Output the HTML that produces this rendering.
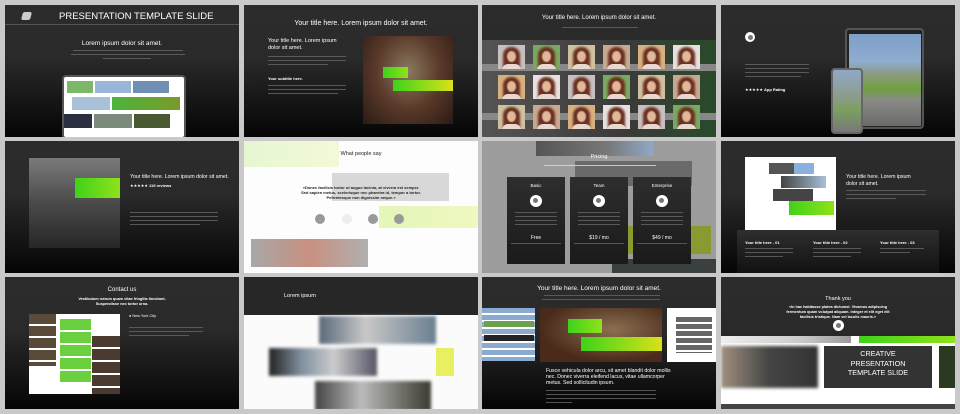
<!DOCTYPE html>
<html><head><meta charset="utf-8"><style>
*{margin:0;padding:0;box-sizing:border-box}
body{width:960px;height:414px;background:#c9c9c9;position:relative;overflow:hidden;font-family:"Liberation Sans",sans-serif;color:#fff}
.s{position:absolute;width:234px;height:132px;overflow:hidden;background:linear-gradient(#2c2c2c,#2a2a2a 40%,#050505)}
.a{position:absolute}
.t{position:absolute;white-space:nowrap}
.ln{position:absolute;height:2px;background:#666;opacity:.8}
.c{text-align:center;left:0;right:0}
.g{background:linear-gradient(90deg,#3fd21a,#8fe21a)}
.gy{background:linear-gradient(90deg,#3fd21a,#d8e21a)}
.ic{position:absolute;border-radius:50%;background:#fff;width:11px;height:11px}
.ic:after{content:"";position:absolute;left:3px;top:3px;width:5px;height:5px;border-radius:50%;background:#777}
.bl{filter:blur(1.5px)}
</style></head><body>

<!-- 1 -->
<div class="s" style="left:5px;top:5px">
 <div class="a" style="left:17px;top:7px;width:9px;height:8px;background:#ccc;transform:skewX(-15deg);border-radius:2px"></div>
 <div class="t" style="left:54px;top:6px;font-size:9.5px">PRESENTATION TEMPLATE SLIDE</div>
 <div class="a" style="left:0;top:19px;width:234px;height:1px;background:#555"></div>
 <div class="t c" style="top:35px;font-size:6.5px;text-align:center">Lorem ipsum dolor sit amet.</div>
 <div class="ln" style="left:68px;top:45px;width:110px;height:1px"></div>
 <div class="ln" style="left:66px;top:49px;width:114px;height:1px"></div>
 <div class="ln" style="left:98px;top:53px;width:48px;height:1px"></div>
 <div class="a" style="left:57px;top:70px;width:124px;height:64px;border:2px solid #555;border-radius:4px;background:#fff">
  <div class="a" style="left:3px;top:4px;width:26px;height:12px;background:#7cb86a"></div>
  <div class="a" style="left:31px;top:4px;width:36px;height:12px;background:#9bb5d8"></div>
  <div class="a" style="left:69px;top:4px;width:36px;height:12px;background:#6f8fb5"></div>
  <div class="a" style="left:8px;top:20px;width:38px;height:13px;background:#a9c0d9"></div>
  <div class="a" style="left:48px;top:20px;width:68px;height:13px;background:linear-gradient(90deg,#4cb43a,#7a9a2a)"></div>
  <div class="a" style="left:0;top:37px;width:28px;height:14px;background:#2a3040"></div>
  <div class="a" style="left:30px;top:37px;width:38px;height:14px;background:#7b8a7a"></div>
  <div class="a" style="left:70px;top:37px;width:36px;height:14px;background:#4a5a30"></div>
 </div>
</div>

<!-- 2 -->
<div class="s" style="left:244px;top:5px">
 <div class="t c" style="top:15px;font-size:7px;text-align:center">Your title here. Lorem ipsum dolor sit amet.</div>
 <div class="t" style="left:24px;top:33px;font-size:5.5px;line-height:7px">Your title here. Lorem ipsum<br>dolor sit amet.</div>
 <div class="ln" style="left:24px;top:51px;width:78px;height:1px"></div>
 <div class="ln" style="left:24px;top:55px;width:78px;height:1px"></div>
 <div class="ln" style="left:24px;top:59px;width:60px;height:1px"></div>
 <div class="t" style="left:24px;top:71px;font-size:4px;font-weight:bold">Your subtitle here.</div>
 <div class="ln" style="left:24px;top:80px;width:78px;height:1px"></div>
 <div class="ln" style="left:24px;top:84px;width:78px;height:1px"></div>
 <div class="ln" style="left:24px;top:88px;width:70px;height:1px"></div>
 <div class="a" style="left:119px;top:31px;width:90px;height:88px;background:radial-gradient(ellipse at 50% 40%,#8a7a60,#5a3a2a 50%,#2a1a15)"></div>
 <div class="a g" style="left:139px;top:62px;width:25px;height:11px"></div>
 <div class="a gy" style="left:149px;top:75px;width:60px;height:11px"></div>
</div>

<!-- 3 -->
<div class="s" style="left:482px;top:5px">
 <div class="t c" style="top:10px;font-size:6px;text-align:center">Your title here. Lorem ipsum dolor sit amet.</div>
 <div class="ln" style="left:80px;top:22px;width:76px;height:1px"></div>
 <div class="a" style="left:0;top:35px;width:234px;height:97px;background:linear-gradient(90deg,#555,#3a3a3a 60%,#2a4a2a)"></div>
 <div class="a" style="left:0;top:59px;width:234px;height:7px;background:#888"></div>
 <div class="a" style="left:0;top:108px;width:234px;height:7px;background:#888"></div>
 <div id="faces"></div>
</div>

<!-- 4 -->
<div class="s" style="left:721px;top:5px">
 <div class="ic" style="left:24px;top:27px;width:10px;height:10px"></div>
 <div class="ln" style="left:24px;top:59px;width:64px;height:1px"></div>
 <div class="ln" style="left:24px;top:63px;width:64px;height:1px"></div>
 <div class="ln" style="left:24px;top:67px;width:64px;height:1px"></div>
 <div class="ln" style="left:24px;top:71px;width:56px;height:1px"></div>
 <div class="t" style="left:24px;top:82px;font-size:4px">★★★★★ <b>App Rating</b></div>
 <div class="a" style="left:124px;top:23px;width:79px;height:101px;border:2px solid #555;border-radius:4px;background:#222"></div>
 <div class="a" style="left:128px;top:29px;width:72px;height:92px;background:linear-gradient(#7e9fc8 0,#90acd0 30%,#8a9a7a 45%,#6fa040 60%,#8a8a88 72%,#6a6a68)"></div>
 <div class="a" style="left:110px;top:63px;width:32px;height:66px;border:2px solid #666;border-radius:4px;background:linear-gradient(#90a8c8,#8a9a80 50%,#7aa060 65%,#777)"></div>
</div>

<!-- 5 -->
<div class="s" style="left:5px;top:141px">
 <div class="a" style="left:24px;top:17px;width:91px;height:90px;background:linear-gradient(#7a7a7a,#4a4a4a 50%,#262626)"></div>
 <div class="a g" style="left:70px;top:37px;width:45px;height:20px"></div>
 <div class="t" style="left:125px;top:33px;font-size:5.2px">Your title here. Lorem ipsum dolor sit amet.</div>
 <div class="t" style="left:125px;top:42px;font-size:4px">★★★★★ <b>119 reviews</b></div>
 <div class="ln" style="left:125px;top:71px;width:88px;height:1px"></div>
 <div class="ln" style="left:125px;top:75px;width:88px;height:1px"></div>
 <div class="ln" style="left:125px;top:79px;width:88px;height:1px"></div>
 <div class="ln" style="left:125px;top:83px;width:70px;height:1px"></div>
</div>

<!-- 6 -->
<div class="s" style="left:244px;top:141px;background:#fdfdfd">
 <div class="a" style="left:0;top:0;width:95px;height:26px;background:linear-gradient(90deg,#e6f7d2,#f3f9d8)"></div>
 <div class="t c" style="top:10px;font-size:5.5px;color:#222;text-align:center">What people say</div>
 <div class="a" style="left:88px;top:32px;width:117px;height:28px;background:#d8d8d8"></div>
 <div class="a" style="left:135px;top:65px;width:99px;height:22px;background:linear-gradient(90deg,#e4f6b8,#eef8c0)"></div>
 <div class="t c" style="top:44px;font-size:4px;color:#222;font-weight:bold;text-align:center;line-height:5px">«Donec facilisis tortor ut augue lacinia, at viverra est semper.<br>Sed sapien metus, scelerisque nec pharetra id, tempor a tortor.<br>Pellentesque non dignissim neque.»</div>
 <div class="a" style="left:71px;top:73px;width:10px;height:10px;border-radius:50%;background:#999"></div>
 <div class="a" style="left:98px;top:73px;width:10px;height:10px;border-radius:50%;background:#eee"></div>
 <div class="a" style="left:124px;top:73px;width:10px;height:10px;border-radius:50%;background:#999"></div>
 <div class="a" style="left:150px;top:73px;width:10px;height:10px;border-radius:50%;background:#999"></div>
 <div class="a" style="left:7px;top:98px;width:117px;height:28px;background:linear-gradient(90deg,#a8a8a8,#c89080 50%,#b0b0b0)"></div>
</div>

<!-- 7 -->
<div class="s" style="left:482px;top:141px;background:#9c9c9c">
 <div class="a" style="left:54px;top:0;width:117px;height:15px;background:linear-gradient(90deg,#555,#777 60%,#90a8c8)"></div>
 <div class="a" style="left:93px;top:20px;width:117px;height:25px;background:#6a6a6a"></div>
 <div class="a" style="left:145px;top:85px;width:84px;height:28px;background:#8a9a30"></div>
 <div class="a" style="left:130px;top:118px;width:104px;height:14px;background:#3a4040"></div>
 <div class="t c" style="top:13px;font-size:5.5px;text-align:center">Pricing</div>
 <div class="ln" style="left:62px;top:24px;width:112px;height:1px;background:#ddd"></div>
 <div id="cards"></div>
</div>

<!-- 8 -->
<div class="s" style="left:721px;top:141px">
 <div class="a" style="left:24px;top:16px;width:91px;height:74px;background:#fff"></div>
 <div class="a" style="left:48px;top:22px;width:25px;height:11px;background:#555"></div>
 <div class="a" style="left:73px;top:22px;width:20px;height:11px;background:#8ab0e0"></div>
 <div class="a" style="left:60px;top:35px;width:45px;height:12px;background:linear-gradient(90deg,#444,#a8c0d8)"></div>
 <div class="a" style="left:52px;top:48px;width:40px;height:12px;background:#444"></div>
 <div class="a g" style="left:68px;top:60px;width:45px;height:14px"></div>
 <div class="t" style="left:125px;top:33px;font-size:5.2px;line-height:7px">Your title here. Lorem ipsum<br>dolor sit amet.</div>
 <div class="ln" style="left:125px;top:49px;width:80px;height:1px"></div>
 <div class="ln" style="left:125px;top:53px;width:80px;height:1px"></div>
 <div class="ln" style="left:125px;top:57px;width:50px;height:1px"></div>
 <div class="a" style="left:16px;top:89px;width:202px;height:43px;background:linear-gradient(#2e2e2e,#111)"></div>
 <div class="t" style="left:24px;top:99px;font-size:4px;font-weight:bold">Your title here - 01</div>
 <div class="t" style="left:92px;top:99px;font-size:4px;font-weight:bold">Your title here - 02</div>
 <div class="t" style="left:159px;top:99px;font-size:4px;font-weight:bold">Your title here - 03</div>
 <div class="ln" style="left:24px;top:107px;width:48px;height:1px"></div><div class="ln" style="left:24px;top:111px;width:48px;height:1px"></div><div class="ln" style="left:24px;top:115px;width:38px;height:1px"></div>
 <div class="ln" style="left:92px;top:107px;width:48px;height:1px"></div><div class="ln" style="left:92px;top:111px;width:48px;height:1px"></div><div class="ln" style="left:92px;top:115px;width:38px;height:1px"></div>
 <div class="ln" style="left:159px;top:107px;width:44px;height:1px"></div><div class="ln" style="left:159px;top:111px;width:30px;height:1px"></div>
</div>

<!-- 9 -->
<div class="s" style="left:5px;top:277px">
 <div class="t c" style="top:10px;font-size:6px;text-align:center">Contact us</div>
 <div class="t c" style="top:20px;font-size:3.8px;font-weight:bold;text-align:center;line-height:5px">Vestibulum rutrum quam vitae fringilla tincidunt.<br>Suspendisse nec tortor urna.</div>
 <div class="a" style="left:24px;top:37px;width:91px;height:80px;background:#fff"></div>
 <div class="a" style="left:24px;top:37px;width:27px;height:52px;background:repeating-linear-gradient(#5a4a3a 0 10px,#fff 10px 12px)"></div>
 <div class="a" style="left:55px;top:42px;width:31px;height:63px;background:repeating-linear-gradient(#6ad040 0 11px,#fff 11px 13px)"></div>
 <div class="a" style="left:87px;top:59px;width:28px;height:58px;background:repeating-linear-gradient(#4a3a30 0 11px,#fff 11px 13px)"></div>
 <div class="t" style="left:124px;top:37px;font-size:3.8px">● New York City</div>
 <div class="ln" style="left:124px;top:50px;width:74px;height:1px"></div><div class="ln" style="left:124px;top:54px;width:74px;height:1px"></div><div class="ln" style="left:124px;top:58px;width:60px;height:1px"></div>
</div>

<!-- 10 -->
<div class="s" style="left:244px;top:277px;background:#fbfbfb">
 <div class="a" style="left:0;top:0;width:234px;height:38px;background:#272727"></div>
 <div class="t" style="left:40px;top:16px;font-size:5.5px">Lorem ipsum</div>
 <div class="a bl" style="left:75px;top:39px;width:117px;height:28px;background:linear-gradient(90deg,#5a6a7a,#c8c8c8 40%,#6a8090)"></div>
 <div class="a bl" style="left:25px;top:71px;width:108px;height:28px;background:linear-gradient(90deg,#222,#8090a0 30%,#ccc 60%,#556)"></div>
 <div class="a" style="left:192px;top:71px;width:18px;height:28px;background:#e6f060"></div>
 <div class="a bl" style="left:71px;top:104px;width:116px;height:30px;background:linear-gradient(90deg,#444,#bbb 40%,#3a3a30)"></div>
</div>

<!-- 11 -->
<div class="s" style="left:482px;top:277px">
 <div class="t c" style="top:8px;font-size:6.5px;text-align:center">Your title here. Lorem ipsum dolor sit amet.</div>
 <div class="ln" style="left:62px;top:18px;width:116px;height:1px"></div>
 <div class="ln" style="left:60px;top:22px;width:118px;height:1px"></div>
 <div class="a" style="left:0;top:31px;width:53px;height:53px;background:repeating-linear-gradient(#8aaad0 0 5px,#fff 5px 7px)"></div>
 <div class="a" style="left:2px;top:44px;width:50px;height:6px;background:#6aa050"></div>
 <div class="a" style="left:2px;top:58px;width:50px;height:6px;background:#222"></div>
 <div class="a" style="left:58px;top:31px;width:122px;height:54px;background:radial-gradient(ellipse at 60% 40%,#8a7050,#4a2a1a 70%)"></div>
 <div class="a g" style="left:86px;top:42px;width:34px;height:14px"></div>
 <div class="a gy" style="left:99px;top:60px;width:81px;height:14px"></div>
 <div class="a" style="left:185px;top:31px;width:49px;height:54px;background:#fff"></div>
 <div class="a" style="left:194px;top:40px;width:36px;height:36px;background:repeating-linear-gradient(#666 0 5px,#fff 5px 7px)"></div>
 <div class="t" style="left:64px;top:91px;font-size:5.2px;line-height:6px">Fusce vehicula dolor arcu, sit amet blandit dolor mollis<br>nec. Donec viverra eleifend lacus, vitae ullamcorper<br>metus. Sed sollicitudin ipsum.</div>
 <div class="ln" style="left:64px;top:113px;width:110px;height:1px"></div><div class="ln" style="left:64px;top:117px;width:110px;height:1px"></div><div class="ln" style="left:64px;top:121px;width:110px;height:1px"></div><div class="ln" style="left:64px;top:125px;width:26px;height:1px"></div>
</div>

<!-- 12 -->
<div class="s" style="left:721px;top:277px">
 <div class="t c" style="top:19px;font-size:5.5px;text-align:center">Thank you</div>
 <div class="t c" style="top:28px;font-size:3.8px;font-weight:bold;text-align:center;line-height:5px">«In hac habitasse platea dictumst. Vivamus adipiscing<br>fermentum quam volutpat aliquam. Integer et elit eget elit<br>facilisis tristique. Nam vel iaculis mauris.»</div>
 <div class="ic" style="left:112px;top:43px"></div>
 <div class="a" style="left:0;top:59px;width:234px;height:73px;background:#fff"></div>
 <div class="a" style="left:0;top:59px;width:130px;height:7px;background:linear-gradient(90deg,#eee,#ccc 60%,#999)"></div>
 <div class="a g" style="left:138px;top:59px;width:96px;height:7px"></div>
 <div class="a bl" style="left:0;top:69px;width:97px;height:42px;background:linear-gradient(90deg,#a09080,#444 50%,#333)"></div>
 <div class="a" style="left:103px;top:69px;width:108px;height:42px;background:#333"></div>
 <div class="a" style="left:218px;top:69px;width:16px;height:42px;background:#2a3a20"></div>
 <div class="t" style="left:103px;top:72px;width:108px;text-align:center;font-size:7.2px;line-height:9.5px">CREATIVE<br>PRESENTATION<br>TEMPLATE SLIDE</div>
 <div class="a" style="left:0;top:127px;width:234px;height:5px;background:#444"></div>
</div>

<script>
(function(){
var f=document.getElementById('faces'),h='';
var bg=['#c8c0c0','#e8e0e0','#d8b080','#c8a890','#d0c0a0','#7aa860'];
for(var r=0;r<3;r++)for(var c=0;c<6;c++){
 var x=16+c*35,y=40+r*30,b=bg[(c*5+r*2)%6];
 h+='<div class="a" style="left:'+x+'px;top:'+y+'px;width:27px;height:24px;overflow:hidden;background:'+b+'">'+
 '<div class="a" style="left:5px;top:2px;width:17px;height:24px;border-radius:8px 8px 3px 3px;background:#6a3020;filter:blur(1px)"></div>'+
 '<div class="a" style="left:9px;top:6px;width:9px;height:11px;border-radius:50%;background:#e2b89a;filter:blur(.6px)"></div>'+
 '<div class="a" style="left:4px;top:19px;width:19px;height:6px;border-radius:6px 6px 0 0;background:#e8d8d0"></div></div>';
}
f.innerHTML=h;
var cd=document.getElementById('cards'),n=['Basic','Team','Enterprise'],p=['Free','$19 / mo','$49 / mo'];h='';
for(var i=0;i<3;i++){var x=25+i*63;
 h+='<div class="a" style="left:'+x+'px;top:36px;width:58px;height:87px;background:linear-gradient(#2e2e2e,#1a1a1a)"></div>';
 h+='<div class="t" style="left:'+x+'px;top:42px;width:58px;text-align:center;font-size:4.5px">'+n[i]+'</div>';
 h+='<div class="ic" style="left:'+(x+23)+'px;top:54px;width:12px;height:12px"></div>';
 for(var k=0;k<4;k++)h+='<div class="ln" style="left:'+(x+8)+'px;top:'+(71+k*4)+'px;width:42px;height:1px"></div>';
 h+='<div class="t" style="left:'+x+'px;top:94px;width:58px;text-align:center;font-size:5px">'+p[i]+'</div>';
 h+='<div class="a" style="left:'+(x+4)+'px;top:102px;width:50px;height:1px;background:#555"></div>';
}
cd.innerHTML=h;
})();
</script>
</body></html>
